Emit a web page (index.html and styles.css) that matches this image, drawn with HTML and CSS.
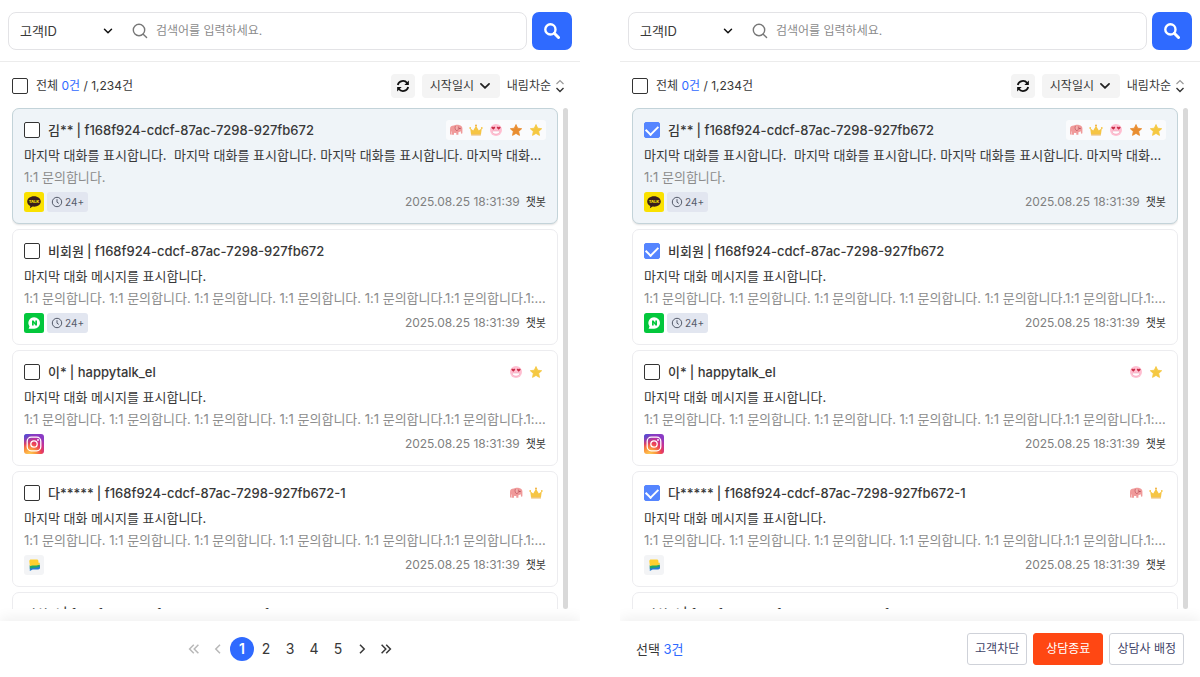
FILE: index.html
```html
<!DOCTYPE html>
<html lang="ko">
<head>
<meta charset="utf-8">
<meta name="viewport" content="width=device-width, initial-scale=1">
<title>상담 목록</title>
<link rel="stylesheet" href="styles.css">
</head>
<body>
<svg class="sprite" aria-hidden="true">
  <defs>
    <radialGradient id="insta-warm" cx="0.28" cy="1.05" r="1.05">
      <stop offset="0" stop-color="#ffd35a"/><stop offset="0.3" stop-color="#fb9a3c"/><stop offset="0.58" stop-color="#ec3f57"/><stop offset="0.8" stop-color="#c2329a"/><stop offset="1" stop-color="#8a3ac4"/>
    </radialGradient>
    <radialGradient id="insta-cool" cx="0" cy="0" r="0.6">
      <stop offset="0" stop-color="#3f55d6"/><stop offset="1" stop-color="#6a40d0" stop-opacity="0"/>
    </radialGradient>
  </defs>
  <symbol id="i-lens" viewBox="0 0 16 16"><circle cx="7" cy="7" r="5.7" fill="none" stroke="currentColor" stroke-width="1.4"/><path d="M11.2 11.2 14.6 14.6" stroke="currentColor" stroke-width="1.4" stroke-linecap="round"/></symbol>
  <symbol id="i-lens-bold" viewBox="0 0 16 16"><circle cx="6.4" cy="6.4" r="5.1" fill="none" stroke="currentColor" stroke-width="2.4"/><path d="M10.3 10.3 14.5 14.5" stroke="currentColor" stroke-width="3" stroke-linecap="round"/></symbol>
  <symbol id="i-down" viewBox="0 0 12 12"><path d="M2.500 4.200 6 7.700l3.500-3.500" fill="none" stroke="currentColor" stroke-width="1.500" stroke-linecap="round" stroke-linejoin="round"/></symbol>
  <symbol id="i-refresh" viewBox="0 0 16 16"><path d="M2 6.8A6.2 6.2 0 0 1 12.8 4.6M14 9.2A6.2 6.2 0 0 1 3.2 11.4" fill="none" stroke="currentColor" stroke-width="2"/><path d="M14.7 1.6v5.2H9.5zM1.3 14.4V9.2h5.2z" fill="currentColor"/></symbol>
  <symbol id="i-sort" viewBox="0 0 10 14"><path d="M1.5 5 5 1.5 8.5 5" fill="none" stroke="#999" stroke-width="1.2"/><path d="M1.5 9 5 12.5 8.5 9" fill="none" stroke="#333" stroke-width="1.4"/></symbol>
  <symbol id="i-clock" viewBox="0 0 12 12"><circle cx="6" cy="6" r="4.7" fill="none" stroke="currentColor" stroke-width="1"/><path d="M6 3.2V6.2L7.8 7.4" fill="none" stroke="currentColor" stroke-width="1"/></symbol>
  <symbol id="i-prev" viewBox="0 0 12 12"><path d="M8 1.8 3.8 6 8 10.2" fill="none" stroke="currentColor" stroke-width="1.5"/></symbol>
  <symbol id="i-next" viewBox="0 0 12 12"><path d="M4 1.8 8.2 6 4 10.2" fill="none" stroke="currentColor" stroke-width="1.5"/></symbol>
  <symbol id="i-first" viewBox="0 0 12 12"><path d="M5.8 1.8 1.6 6l4.2 4.2M10.4 1.8 6.2 6l4.2 4.2" fill="none" stroke="currentColor" stroke-width="1.5"/></symbol>
  <symbol id="i-last" viewBox="0 0 12 12"><path d="M6.2 1.8 10.4 6l-4.2 4.2M1.6 1.8 5.8 6l-4.2 4.2" fill="none" stroke="currentColor" stroke-width="1.5"/></symbol>
  <symbol id="i-elephant" viewBox="0 0 14 12"><path d="M1 10.6V5C1 2.6 2.6 1.6 5 1.6c.8-.9 3.8-1.1 5-.6 2.3.3 3.4 1.6 3.4 3.6v4.5c0 .9-1.5.9-1.5 0V7.4h-.9c-.3.5-.9.8-1.6.8v2.6H7.3V8.8c-.7.3-1.6.3-2.3 0v2H2.4V7.6H2v3z" fill="#f09a9a"/><path d="M6.4 2c-.7 1.7-.2 4.3 1.6 4.8 1.1-.5 1.6-2 1.3-4.2" fill="#f3b1ae" stroke="#c25560" stroke-width=".7"/><circle cx="10.9" cy="4.4" r=".6" fill="#8c3442"/></symbol>
  <symbol id="i-crown" viewBox="0 0 14 12"><path d="M2 10.2 1.2 4.3l3 2.2L7 1.8l2.8 4.7 3-2.2-.8 5.9z" fill="#f6c544"/><circle cx="1.2" cy="4" r=".9" fill="#f6c544"/><circle cx="7" cy="1.4" r="1" fill="#f2b03c"/><circle cx="12.8" cy="4" r=".9" fill="#f6c544"/><path d="M2.1 10.4h9.8v1H2.1z" fill="#e9aa3a"/></symbol>
  <symbol id="i-love" viewBox="0 0 14 14"><circle cx="7" cy="7" r="6" fill="#ffc0d2"/><path d="M4.3 6.700 2.500 5C2 4 3.500 3.300 4.300 4.300 5.100 3.300 6.600 4 6.100 5zM9.700 6.700 7.900 5C7.400 4 8.900 3.300 9.700 4.300c.8-1 2.300-.3 1.800.7z" fill="#c92c48"/><path d="M3.200 8.1h7.600c0 4-7.600 4-7.600 0z" fill="#fff" stroke="#e78da7" stroke-width=".4"/></symbol>
  <symbol id="i-star" viewBox="0 0 14 14"><path d="M7 1.500 8.700 5.200l4 .5-3 2.700.8 4L7 10.400l-3.500 2 .8-4-3-2.700 4-.5z" fill="currentColor" stroke="currentColor" stroke-width=".8" stroke-linejoin="round"/></symbol>
  <symbol id="i-kakao" viewBox="0 0 20 20"><rect width="20" height="20" rx="2.500" fill="#fae100"/><path d="M10 4.300c-3.900 0-6.800 2.300-6.800 5.200 0 2 1.300 3.600 3.100 4.500l-.4 2.300 2.700-1.700c4.600.6 8.200-1.700 8.200-5.100 0-2.900-2.900-5.200-6.800-5.200z" fill="#371d1e"/><text x="10" y="11.200" text-anchor="middle" font-family="Inter, sans-serif" font-size="4" font-weight="800" fill="#fae100">TALK</text></symbol>
  <symbol id="i-naver" viewBox="0 0 20 20"><rect width="20" height="20" rx="2.500" fill="#03c73c"/><path d="M10.200 4.200a5.800 5.800 0 1 1 0 11.600H4.600l.9-2.400a5.800 5.800 0 0 1 4.700-9.200z" fill="#fff"/><path d="M8 7.500h1.600l1.700 2.500V7.500H13v5h-1.600L9.700 10v2.500H8z" fill="#03c73c"/></symbol>
  <symbol id="i-insta" viewBox="0 0 20 20"><rect width="20" height="20" rx="3" fill="url(#insta-warm)"/><rect width="20" height="20" rx="3" fill="url(#insta-cool)"/><rect x="3.200" y="3.200" width="13.600" height="13.600" rx="4" fill="none" stroke="#fff" stroke-width="1.300"/><circle cx="10" cy="10" r="3.200" fill="none" stroke="#fff" stroke-width="1.300"/><circle cx="14" cy="6" r=".9" fill="#fff"/></symbol>
  <symbol id="i-happy" viewBox="0 0 20 20"><rect width="20" height="20" rx="3" fill="#f3f4f6"/><path d="M5.800 10.500H16v2.200c0 1-.8 1.700-1.800 1.700H8.700l-2.900 1.600z" fill="#277bd4"/><path d="M5.800 10.200 15.800 9.500v1.700c-2.500 2-6 .9-10 2.600z" fill="#23a865"/><path d="M5.300 6.200c0-1 .7-1.700 1.700-1.700h6c1.500 0 1.500 1.600 1.500 3.200h1.300v1.600c-2.800 2-6.600.6-9.900 1.900z" fill="#ffd02f"/></symbol>
</svg>

<main class="board">
  <section class="panel" aria-label="상담 목록">
    <form class="search">
      <div class="search-box">
        <div class="field">
          <select class="field-select" aria-label="검색 조건"><option>고객ID</option></select>
          <svg class="icon-12"><use href="#i-down"/></svg>
        </div>
        <svg class="lens"><use href="#i-lens"/></svg>
        <input class="query" type="text" placeholder="검색어를 입력하세요." aria-label="검색어">
      </div>
      <button class="search-button" type="button" aria-label="검색"><svg class="icon-16"><use href="#i-lens-bold"/></svg></button>
    </form>
    <div class="toolbar">
      <label class="all"><input class="check" type="checkbox"><span>전체 <span class="accent">0건</span> / 1,234건</span></label>
      <div class="tools">
        <button class="refresh" type="button" aria-label="새로고침"><svg class="icon-14"><use href="#i-refresh"/></svg></button>
        <div class="sort"><select class="sort-select" aria-label="정렬 기준"><option>시작일시</option></select><svg class="icon-14"><use href="#i-down"/></svg></div>
        <button class="order" type="button">내림차순<svg class="updown"><use href="#i-sort"/></svg></button>
      </div>
    </div>
    <div class="scroller">
      <div class="list">
        <article class="card card-active">
          <div class="head"><label class="who"><input class="check" type="checkbox"><span class="name">김**</span><span class="uid">| f168f924-cdcf-87ac-7298-927fb672</span></label>
            <div class="marks"><svg class="mark"><use href="#i-elephant"/></svg><svg class="mark"><use href="#i-crown"/></svg><svg class="mark"><use href="#i-love"/></svg><svg class="mark orange"><use href="#i-star"/></svg><svg class="mark yellow"><use href="#i-star"/></svg></div></div>
          <p class="last">마지막 대화를 표시합니다.&nbsp; 마지막 대화를 표시합니다. 마지막 대화를 표시합니다. 마지막 대화를 표시합니다.</p>
          <p class="topic">1:1 문의합니다.</p>
          <div class="meta"><svg class="channel"><use href="#i-kakao"/></svg><span class="badge"><svg class="icon-12"><use href="#i-clock"/></svg>24+</span><time class="time">2025.08.25 18:31:39</time><span class="bot">챗봇</span></div>
        </article>
        <article class="card">
          <div class="head"><label class="who"><input class="check" type="checkbox"><span class="name">비회원</span><span class="uid">| f168f924-cdcf-87ac-7298-927fb672</span></label></div>
          <p class="last">마지막 대화 메시지를 표시합니다.</p>
          <p class="topic">1:1 문의합니다. 1:1 문의합니다. 1:1 문의합니다. 1:1 문의합니다. 1:1 문의합니다.1:1 문의합니다.1:1 문의합니다.</p>
          <div class="meta"><svg class="channel"><use href="#i-naver"/></svg><span class="badge"><svg class="icon-12"><use href="#i-clock"/></svg>24+</span><time class="time">2025.08.25 18:31:39</time><span class="bot">챗봇</span></div>
        </article>
        <article class="card">
          <div class="head"><label class="who"><input class="check" type="checkbox"><span class="name">이*</span><span class="uid">| happytalk_el</span></label>
            <div class="marks"><svg class="mark"><use href="#i-love"/></svg><svg class="mark yellow"><use href="#i-star"/></svg></div></div>
          <p class="last">마지막 대화 메시지를 표시합니다.</p>
          <p class="topic">1:1 문의합니다. 1:1 문의합니다. 1:1 문의합니다. 1:1 문의합니다. 1:1 문의합니다.1:1 문의합니다.1:1 문의합니다.</p>
          <div class="meta"><svg class="channel"><use href="#i-insta"/></svg><time class="time">2025.08.25 18:31:39</time><span class="bot">챗봇</span></div>
        </article>
        <article class="card">
          <div class="head"><label class="who"><input class="check" type="checkbox"><span class="name">다*****</span><span class="uid">| f168f924-cdcf-87ac-7298-927fb672-1</span></label>
            <div class="marks"><svg class="mark"><use href="#i-elephant"/></svg><svg class="mark"><use href="#i-crown"/></svg></div></div>
          <p class="last">마지막 대화 메시지를 표시합니다.</p>
          <p class="topic">1:1 문의합니다. 1:1 문의합니다. 1:1 문의합니다. 1:1 문의합니다. 1:1 문의합니다.1:1 문의합니다.1:1 문의합니다.</p>
          <div class="meta"><svg class="channel"><use href="#i-happy"/></svg><time class="time">2025.08.25 18:31:39</time><span class="bot">챗봇</span></div>
        </article>
        <article class="card">
          <div class="head"><span class="who"><span class="name">비회원</span><span class="uid">| f168f924-cdcf-87ac-7298-927fb672</span></span></div>
        </article>
      </div>
      <div class="thumb"></div>
    </div>
    <footer class="footer">
      <nav class="pager" aria-label="페이지">
        <button class="page" type="button" disabled aria-label="처음"><svg class="icon-12"><use href="#i-first"/></svg></button>
        <button class="page" type="button" disabled aria-label="이전"><svg class="icon-12"><use href="#i-prev"/></svg></button>
        <button class="page page-current" type="button" aria-current="page">1</button>
        <button class="page" type="button">2</button>
        <button class="page" type="button">3</button>
        <button class="page" type="button">4</button>
        <button class="page" type="button">5</button>
        <button class="page" type="button" aria-label="다음"><svg class="icon-12"><use href="#i-next"/></svg></button>
        <button class="page" type="button" aria-label="마지막"><svg class="icon-12"><use href="#i-last"/></svg></button>
      </nav>
    </footer>
  </section>

  <section class="panel" aria-label="상담 선택">
    <form class="search">
      <div class="search-box">
        <div class="field">
          <select class="field-select" aria-label="검색 조건"><option>고객ID</option></select>
          <svg class="icon-12"><use href="#i-down"/></svg>
        </div>
        <svg class="lens"><use href="#i-lens"/></svg>
        <input class="query" type="text" placeholder="검색어를 입력하세요." aria-label="검색어">
      </div>
      <button class="search-button" type="button" aria-label="검색"><svg class="icon-16"><use href="#i-lens-bold"/></svg></button>
    </form>
    <div class="toolbar">
      <label class="all"><input class="check" type="checkbox"><span>전체 <span class="accent">0건</span> / 1,234건</span></label>
      <div class="tools">
        <button class="refresh" type="button" aria-label="새로고침"><svg class="icon-14"><use href="#i-refresh"/></svg></button>
        <div class="sort"><select class="sort-select" aria-label="정렬 기준"><option>시작일시</option></select><svg class="icon-14"><use href="#i-down"/></svg></div>
        <button class="order" type="button">내림차순<svg class="updown"><use href="#i-sort"/></svg></button>
      </div>
    </div>
    <div class="scroller">
      <div class="list">
        <article class="card card-active">
          <div class="head"><label class="who"><input class="check" type="checkbox" checked><span class="name">김**</span><span class="uid">| f168f924-cdcf-87ac-7298-927fb672</span></label>
            <div class="marks"><svg class="mark"><use href="#i-elephant"/></svg><svg class="mark"><use href="#i-crown"/></svg><svg class="mark"><use href="#i-love"/></svg><svg class="mark orange"><use href="#i-star"/></svg><svg class="mark yellow"><use href="#i-star"/></svg></div></div>
          <p class="last">마지막 대화를 표시합니다.&nbsp; 마지막 대화를 표시합니다. 마지막 대화를 표시합니다. 마지막 대화를 표시합니다.</p>
          <p class="topic">1:1 문의합니다.</p>
          <div class="meta"><svg class="channel"><use href="#i-kakao"/></svg><span class="badge"><svg class="icon-12"><use href="#i-clock"/></svg>24+</span><time class="time">2025.08.25 18:31:39</time><span class="bot">챗봇</span></div>
        </article>
        <article class="card">
          <div class="head"><label class="who"><input class="check" type="checkbox" checked><span class="name">비회원</span><span class="uid">| f168f924-cdcf-87ac-7298-927fb672</span></label></div>
          <p class="last">마지막 대화 메시지를 표시합니다.</p>
          <p class="topic">1:1 문의합니다. 1:1 문의합니다. 1:1 문의합니다. 1:1 문의합니다. 1:1 문의합니다.1:1 문의합니다.1:1 문의합니다.</p>
          <div class="meta"><svg class="channel"><use href="#i-naver"/></svg><span class="badge"><svg class="icon-12"><use href="#i-clock"/></svg>24+</span><time class="time">2025.08.25 18:31:39</time><span class="bot">챗봇</span></div>
        </article>
        <article class="card">
          <div class="head"><label class="who"><input class="check" type="checkbox"><span class="name">이*</span><span class="uid">| happytalk_el</span></label>
            <div class="marks"><svg class="mark"><use href="#i-love"/></svg><svg class="mark yellow"><use href="#i-star"/></svg></div></div>
          <p class="last">마지막 대화 메시지를 표시합니다.</p>
          <p class="topic">1:1 문의합니다. 1:1 문의합니다. 1:1 문의합니다. 1:1 문의합니다. 1:1 문의합니다.1:1 문의합니다.1:1 문의합니다.</p>
          <div class="meta"><svg class="channel"><use href="#i-insta"/></svg><time class="time">2025.08.25 18:31:39</time><span class="bot">챗봇</span></div>
        </article>
        <article class="card">
          <div class="head"><label class="who"><input class="check" type="checkbox" checked><span class="name">다*****</span><span class="uid">| f168f924-cdcf-87ac-7298-927fb672-1</span></label>
            <div class="marks"><svg class="mark"><use href="#i-elephant"/></svg><svg class="mark"><use href="#i-crown"/></svg></div></div>
          <p class="last">마지막 대화 메시지를 표시합니다.</p>
          <p class="topic">1:1 문의합니다. 1:1 문의합니다. 1:1 문의합니다. 1:1 문의합니다. 1:1 문의합니다.1:1 문의합니다.1:1 문의합니다.</p>
          <div class="meta"><svg class="channel"><use href="#i-happy"/></svg><time class="time">2025.08.25 18:31:39</time><span class="bot">챗봇</span></div>
        </article>
        <article class="card">
          <div class="head"><span class="who"><span class="name">비회원</span><span class="uid">| f168f924-cdcf-87ac-7298-927fb672</span></span></div>
        </article>
      </div>
      <div class="thumb"></div>
    </div>
    <footer class="footer footer-actions">
      <p class="picked">선택 <span class="accent">3건</span></p>
      <div class="actions">
        <button class="action" type="button">고객차단</button>
        <button class="action action-end" type="button">상담종료</button>
        <button class="action" type="button">상담사 배정</button>
      </div>
    </footer>
  </section>
</main>
</body>
</html>
```

FILE: styles.css
```css
* { box-sizing: border-box; }

body {
  margin: 0;
  background: #fff;
  color: #383838;
  font-family: Inter, "Noto Sans CJK KR", sans-serif;
  font-size: 13px;
  line-height: 20px;
}

p { margin: 0; }

button, select, input {
  margin: 0;
  padding: 0;
  border: 0;
  background: none;
  color: inherit;
  font: inherit;
}

button { cursor: pointer; }
select { appearance: none; outline: 0; }
svg { display: block; flex: none; }

.sprite { position: absolute; width: 0; height: 0; }
.icon-12 { width: 12px; height: 12px; }
.icon-14 { width: 14px; height: 14px; }
.icon-16 { width: 16px; height: 16px; }
.accent { color: #2f6aff; }

.board {
  display: grid;
  grid-template-columns: repeat(2, minmax(0, 1fr));
  column-gap: 40px;
  height: 100vh;
}

.panel {
  display: flex;
  flex-direction: column;
  min-height: 0;
}

/* Search */
.search {
  display: flex;
  gap: 5px;
  padding: 12px 8px 11px;
  border-bottom: 1px solid #ececec;
}

.search-box {
  display: flex;
  flex: 1;
  align-items: center;
  height: 38px;
  padding: 0 11px;
  border: 1px solid #e3e3e6;
  border-radius: 8px;
}

.field { display: grid; align-items: center; width: 94px; margin-right: 18px; }
.field > * { grid-area: 1 / 1; }
.field > svg { justify-self: end; color: #111; pointer-events: none; }
.field-select { width: 100%; height: 20px; }
.lens { width: 16px; height: 16px; margin-right: 8px; color: #777; }
.query { flex: 1; min-width: 0; height: 20px; outline: 0; font-size: 12px; }
.query::placeholder { color: #8c8c8c; opacity: 1; }

.search-button {
  display: grid;
  place-items: center;
  width: 40px;
  height: 38px;
  border-radius: 7px;
  background: #2f6aff;
  color: #fff;
}

/* Toolbar */
.toolbar {
  display: flex;
  align-items: center;
  justify-content: space-between;
  padding: 12px 15px 10px 12px;
  font-size: 12px;
}

.all, .who { display: flex; align-items: center; gap: 8px; }
.tools { display: flex; align-items: center; gap: 7px; }

.check {
  display: grid;
  place-items: center;
  flex: none;
  width: 16px;
  height: 16px;
  border: 1px solid #333;
  border-radius: 2px;
  background: #fff;
  appearance: none;
}

.check:checked { border-color: #5585ff; background: #5585ff; }

.check:checked::before {
  width: 10px;
  height: 6px;
  margin-bottom: 3px;
  border: solid #fff;
  border-width: 0 0 2px 2px;
  content: "";
  transform: rotate(-45deg);
}

.refresh {
  display: grid;
  place-items: center;
  width: 24px;
  height: 24px;
  border-radius: 4px;
  background: #f4f4f4;
  color: #111;
}

.sort {
  display: flex;
  align-items: center;
  gap: 3px;
  height: 24px;
  padding: 0 8px;
  border-radius: 4px;
  background: #f4f4f4;
}

.sort > svg { color: #222; }
.order { display: flex; align-items: center; gap: 4px; height: 24px; }
.updown { width: 10px; height: 14px; }

/* List */
.scroller {
  display: flex;
  flex: 1;
  gap: 5px;
  min-height: 0;
  margin-bottom: 12px;
  padding: 0 12px;
}

.list {
  display: flex;
  flex: 1;
  flex-direction: column;
  gap: 5px;
  min-width: 0;
  overflow: hidden;
}

.thumb { width: 5px; border-radius: 3px; background: #d9d9d9; }

.card {
  flex: none;
  min-height: 60px;
  padding: 11px;
  border: 1px solid #ececef;
  border-radius: 7px;
  background: #fff;
}

.card-active {
  border-color: #c3d3d9;
  background: #eff4f8;
  box-shadow: 0 1px 2px #0000001f;
}

.head { display: flex; justify-content: space-between; height: 20px; }
.who { gap: 3px; font-weight: 500; }
.who .check { margin-right: 5px; }

.marks { display: flex; border-radius: 3px; background: #ffffffa6; }
.mark { width: 20px; height: 20px; padding: 3px; }
.orange { color: #e88d30; }
.yellow { color: #f5c842; }

.last, .topic {
  overflow: hidden;
  text-overflow: ellipsis;
  white-space: nowrap;
}

.last { margin-top: 5px; }
.topic { margin-top: 2px; color: #8c8c8c; }

.meta {
  display: flex;
  align-items: center;
  gap: 3px;
  margin-top: 5px;
  font-size: 12px;
}

.channel { width: 20px; height: 20px; }

.badge {
  display: flex;
  align-items: center;
  gap: 2px;
  height: 20px;
  padding: 0 4px;
  border-radius: 3px;
  background: #e2e6f0;
  color: #555b6a;
  font-size: 10px;
}

.time { margin-left: auto; color: #808080; }
.bot { margin-left: 3px; font-size: 11px; }

/* Footer */
.footer {
  display: flex;
  align-items: center;
  justify-content: center;
  height: 56px;
  background: #fff;
  box-shadow: 0 -4px 12px #0000000f;
  clip-path: inset(-20px 0 0 0);
}

.footer-actions { justify-content: space-between; padding: 0 16px; }
.pager { display: flex; }

.page {
  display: grid;
  place-items: center;
  width: 24px;
  height: 24px;
  border-radius: 50%;
  font-size: 14px;
}

.page:disabled { color: #b8b8b8; }
.page-current { background: #2f6aff; color: #fff; font-weight: 600; }
.actions { display: flex; gap: 6px; }

.action {
  height: 32px;
  padding: 0 7px;
  border: 1px solid #cfd2d9;
  border-radius: 3px;
  background: #fff;
  color: #3f4468;
  font-size: 12px;
}

.action-end { padding: 0 12px; border-color: #ff4713; background: #ff4713; color: #fff; }
```
